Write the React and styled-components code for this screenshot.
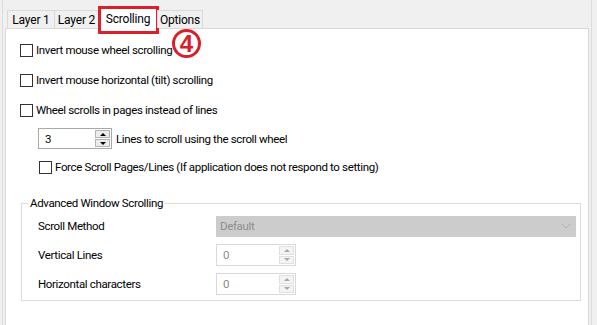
import React from "react";
import styled, { createGlobalStyle } from "styled-components";

const Global = createGlobalStyle`
  html, body { margin: 0; padding: 0; background: #f0f0f0; }
  body {
    font-family: Roboto, "Liberation Sans", sans-serif;
    font-size: 11.5px;
    letter-spacing: -0.35px;
    color: #000;
  }
  * { box-sizing: border-box; }
`;

const Page = styled.div`
  position: relative;
  width: 597px;
  height: 325px;
  overflow: hidden;
  background: #f0f0f0;
  padding-left: 2px;
`;

const Frame = styled.div`
  width: 590px;
  height: 100%;
  border-left: 1px solid #dcdcdc;
  border-right: 1px solid #dcdcdc;
  padding: 0 2px;
  display: flex;
  flex-direction: column;
`;

const TabStrip = styled.div`
  height: 28px;
  display: flex;
  align-items: flex-end;
  padding-left: 2px;
  position: relative;
  z-index: 2;
`;

const Tab = styled.div`
  position: relative;
  width: ${(p) => p.$width}px;
  height: ${(p) => (p.$active ? 22 : 18)}px;
  margin-bottom: ${(p) => (p.$active ? -1 : 0)}px;
  margin-left: -1px;
  display: flex;
  align-items: center;
  justify-content: center;
  padding-top: ${(p) => (p.$active ? 0 : 1)}px;
  background: ${(p) => (p.$active ? "#fff" : "#f0f0f0")};
  border: 1px solid #d9d9d9;
  border-bottom: none;
  color: #000;
  font-size: 12px;
  letter-spacing: -0.2px;
  white-space: nowrap;
  &:first-child { margin-left: 0; }
`;

const Highlight = styled.div`
  position: absolute;
  left: -1px;
  right: -2px;
  top: -2px;
  bottom: -5px;
  border: 3px solid #db1f2b;
  pointer-events: none;
`;

const StepBadge = styled.div`
  position: absolute;
  left: 172px;
  top: 29px;
  width: 29px;
  height: 29px;
  border: 3px solid #d6202c;
  border-radius: 50%;
  display: flex;
  align-items: center;
  justify-content: center;
  padding-top: 1px;
  color: #d6202c;
  font-family: "Liberation Sans", Arial, sans-serif;
  font-weight: bold;
  font-size: 24px;
  letter-spacing: 0;
  line-height: 1;
  z-index: 3;
`;

const Panel = styled.div`
  flex: 1;
  background: #fff;
  border: 1px solid #d9d9d9;
  border-bottom: none;
  padding: 6px 0 0 14px;
  display: flex;
  flex-direction: column;
  position: relative;
  z-index: 1;
`;

const CheckRow = styled.label`
  height: 30px;
  display: flex;
  align-items: center;
  gap: 3px;
  margin-left: ${(p) => p.$indent || 0}px;
  margin-top: ${(p) => p.$top || 0}px;
  white-space: nowrap;
`;

const Box = styled.span`
  width: 13px;
  height: 13px;
  border: 1px solid #333;
  background: #fff;
  flex: none;
`;

const SpinRow = styled.div`
  height: 21px;
  margin-top: 3px;
  margin-left: 18px;
  display: flex;
  align-items: center;
  gap: 4px;
`;

const Spin = styled.div`
  width: ${(p) => p.$width}px;
  height: ${(p) => p.$height}px;
  border: 1px solid ${(p) => (p.$disabled ? "#d9d9d9" : "#a9a9a9")};
  background: #fff;
  display: flex;
  align-items: stretch;
`;

const SpinValue = styled.span`
  flex: 1;
  display: flex;
  align-items: center;
  padding-left: 6px;
  color: ${(p) => (p.$disabled ? "#8c8c8c" : "#000")};
`;

const SpinButtons = styled.span`
  width: 17px;
  display: flex;
  flex-direction: column;
  gap: 1px;
  padding: 1px;
`;

const SpinButton = styled.span`
  flex: 1;
  display: flex;
  align-items: center;
  justify-content: center;
  background: ${(p) => (p.$disabled ? "#f4f4f4" : "#ececec")};
  border: 1px solid ${(p) => (p.$disabled ? "#e0e0e0" : "#b4b4b4")};
`;

const Arrow = styled.span`
  width: 0;
  height: 0;
  border-left: 3px solid transparent;
  border-right: 3px solid transparent;
  ${(p) =>
    p.$down
      ? `border-top: 3px solid ${p.$disabled ? "#a8a8a8" : "#000"};`
      : `border-bottom: 3px solid ${p.$disabled ? "#a8a8a8" : "#000"};`}
`;

const Group = styled.div`
  margin-top: 21px;
  margin-left: 1px;
  width: 560px;
  height: 98px;
  border: 1px solid #dcdcdc;
  display: flex;
  flex-direction: column;
`;

const Legend = styled.div`
  align-self: flex-start;
  margin: -9px 0 0 6px;
  padding: 0 2px;
  height: 17px;
  line-height: 17px;
  background: #fff;
`;

const GroupRows = styled.div`
  margin-top: 3px;
  padding-left: 16px;
  display: flex;
  flex-direction: column;
  gap: 7px;
`;

const FieldRow = styled.div`
  height: 22px;
  display: grid;
  grid-template-columns: 178px auto;
  align-items: center;
`;

const Dropdown = styled.div`
  width: 360px;
  height: 21px;
  background: #cccccc;
  border: 1px solid #cccccc;
  color: #8c8c8c;
  display: flex;
  align-items: center;
  justify-content: space-between;
  padding: 0 4px 0 3px;
`;

function Spinner({ value, width, height, disabled }) {
  return (
    <Spin $width={width} $height={height} $disabled={disabled}>
      <SpinValue $disabled={disabled}>{value}</SpinValue>
      <SpinButtons>
        <SpinButton $disabled={disabled}>
          <Arrow $disabled={disabled} />
        </SpinButton>
        <SpinButton $disabled={disabled}>
          <Arrow $down $disabled={disabled} />
        </SpinButton>
      </SpinButtons>
    </Spin>
  );
}

function Check({ children, indent, top }) {
  return (
    <CheckRow $indent={indent} $top={top}>
      <Box />
      <span>{children}</span>
    </CheckRow>
  );
}

export default function App() {
  return (
    <>
      <Global />
      <Page>
        <Frame>
          <TabStrip>
            <Tab $width={48}>Layer 1</Tab>
            <Tab $width={45}>Layer 2</Tab>
            <Tab $width={60} $active>
              Scrolling
              <Highlight />
            </Tab>
            <Tab $width={46}>Options</Tab>
          </TabStrip>
          <Panel>
            <Check>Invert mouse wheel scrolling</Check>
            <Check>Invert mouse horizontal (tilt) scrolling</Check>
            <Check>Wheel scrolls in pages instead of lines</Check>
            <SpinRow>
              <Spinner value="3" width={74} height={21} />
              <span>Lines to scroll using the scroll wheel</span>
            </SpinRow>
            <Check indent={19} top={3}>
              Force Scroll Pages/Lines (If application does not respond to setting)
            </Check>
            <Group>
              <Legend>Advanced Window Scrolling</Legend>
              <GroupRows>
                <FieldRow>
                  <span>Scroll Method</span>
                  <Dropdown>
                    <span>Default</span>
                    <svg width="10" height="6" viewBox="0 0 10 6">
                      <path d="M1 1 L5 5 L9 1" fill="none" stroke="#b0b0b0" strokeWidth="1" />
                    </svg>
                  </Dropdown>
                </FieldRow>
                <FieldRow>
                  <span>Vertical Lines</span>
                  <Spinner value="0" width={80} height={22} disabled />
                </FieldRow>
                <FieldRow>
                  <span>Horizontal characters</span>
                  <Spinner value="0" width={80} height={22} disabled />
                </FieldRow>
              </GroupRows>
            </Group>
          </Panel>
        </Frame>
        <StepBadge>4</StepBadge>
      </Page>
    </>
  );
}
